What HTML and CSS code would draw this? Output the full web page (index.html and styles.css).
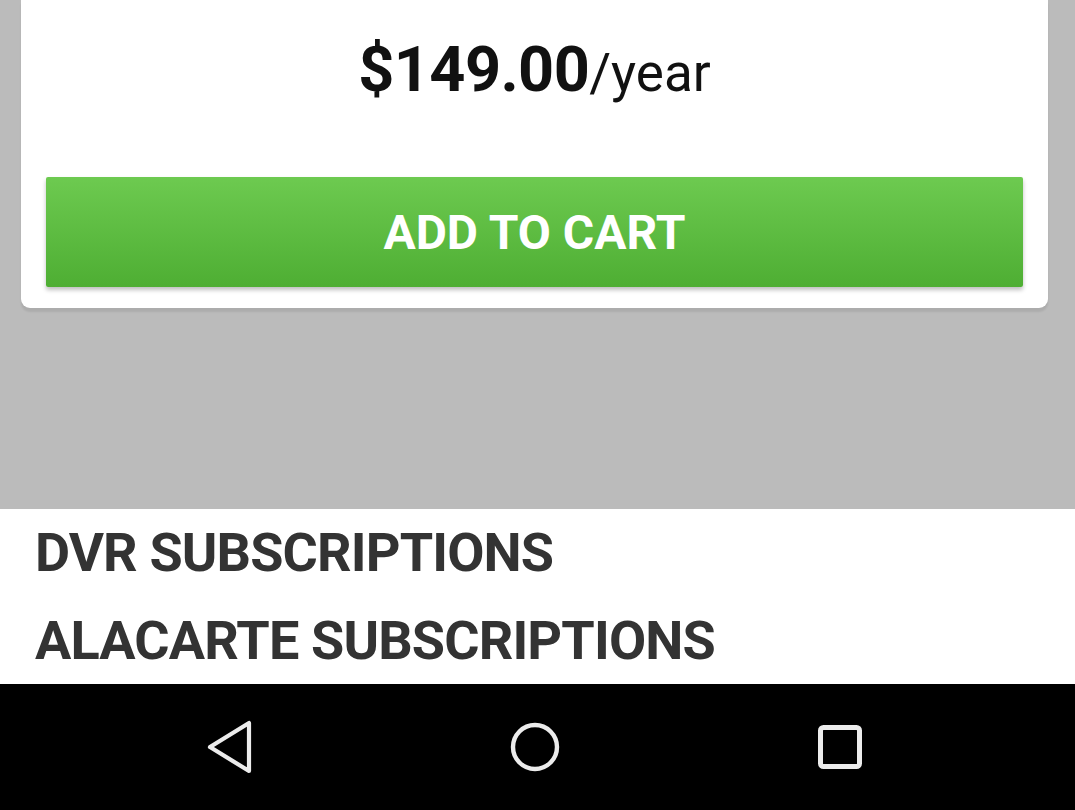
FILE: index.html
```html
<!DOCTYPE html>
<html lang="en">
<head>
<meta charset="utf-8">
<title>Subscription</title>
<link rel="stylesheet" href="styles.css">
</head>
<body>
<div class="screen">
  <section class="stage">
    <div class="card">
      <div class="price"><span class="amount">$149.00</span><span class="period">/year</span></div>
      <button class="cart-btn" type="button">ADD TO CART</button>
    </div>
  </section>
  <section class="list">
    <div class="list-item">DVR SUBSCRIPTIONS</div>
    <div class="list-item">ALACARTE SUBSCRIPTIONS</div>
  </section>
  <nav class="navbar">
    <span class="nav-btn">
      <svg width="60" height="60" viewBox="0 0 60 60"><path d="M49 6 L49 54 L10 30 Z" fill="none" stroke="#ececec" stroke-width="4.2" stroke-linejoin="round"/></svg>
    </span>
    <span class="nav-btn">
      <svg width="60" height="60" viewBox="0 0 60 60"><circle cx="30" cy="30" r="22" fill="none" stroke="#ececec" stroke-width="4.4"/></svg>
    </span>
    <span class="nav-btn">
      <svg width="60" height="60" viewBox="0 0 60 60"><rect x="10.5" y="10.5" width="39" height="39" rx="3" fill="none" stroke="#ececec" stroke-width="5"/></svg>
    </span>
  </nav>
</div>
</body>
</html>
```
FILE: styles.css
```css
html, body {
  margin: 0;
  padding: 0;
}
body {
  font-family: Roboto, "Liberation Sans", Arial, sans-serif;
  background: #000;
}
.screen {
  width: 1075px;
  height: 810px;
  display: flex;
  flex-direction: column;
  overflow: hidden;
}
.stage {
  height: 509px;
  background: #bbbbbb;
  padding: 0 27px 0 21px;
  box-sizing: border-box;
}
.card {
  background: #fff;
  border-radius: 0 0 9px 9px;
  box-shadow: 0 4px 2px rgba(0, 0, 0, 0.08);
  padding: 30px 25px 21px 25px;
  display: flex;
  flex-direction: column;
}
.price {
  height: 80px;
  line-height: 80px;
  text-align: center;
  color: #111;
  margin-bottom: 67px;
}
.amount {
  font-size: 63px;
  font-weight: 700;
  letter-spacing: -0.6px;
}
.period {
  font-size: 53px;
  font-weight: 400;
}
.cart-btn {
  height: 110px;
  border: none;
  border-radius: 2px;
  background: linear-gradient(#6dca50, #4eae33);
  box-shadow: 0 3px 4px rgba(0, 0, 0, 0.25);
  color: #fff;
  font-family: Roboto, "Liberation Sans", Arial, sans-serif;
  font-size: 48px;
  font-weight: 700;
  padding: 0;
  margin-left: 0;
}
.list {
  height: 175px;
  background: #fff;
  padding-left: 35px;
}
.list-item {
  height: 88px;
  line-height: 88px;
  font-size: 54px;
  font-weight: 700;
  color: #333;
  letter-spacing: -0.85px;
}
.navbar {
  flex: 1;
  background: #000;
  display: flex;
  justify-content: center;
  align-items: center;
  gap: 245px;
  padding-right: 5px;
}
.nav-btn {
  width: 60px;
  height: 60px;
  display: flex;
}
```
